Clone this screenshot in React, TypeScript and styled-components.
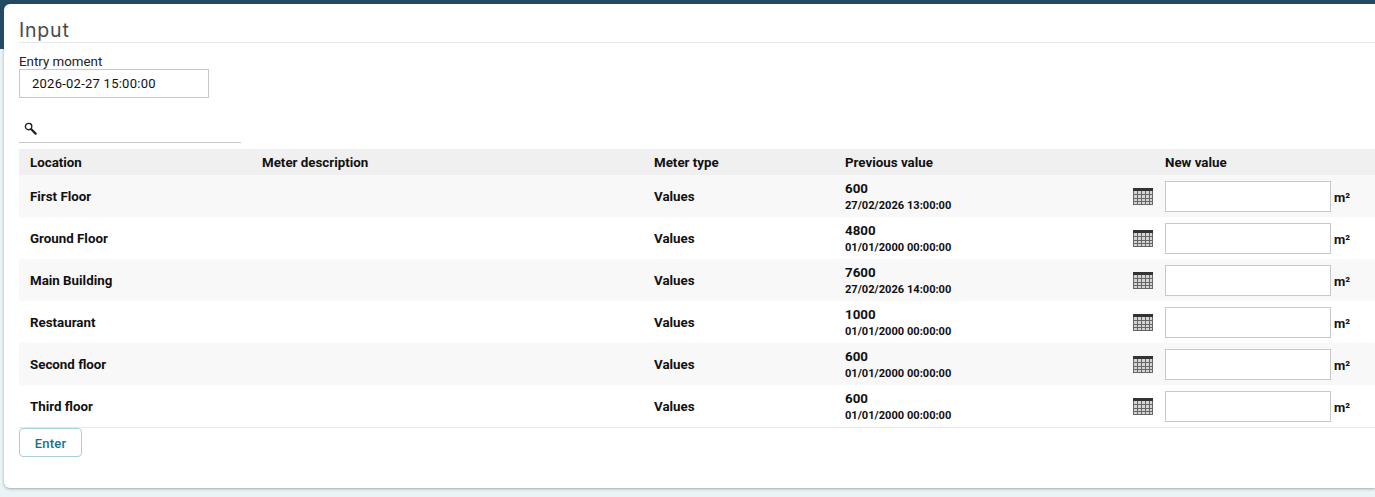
import React from "react";
import styled, { createGlobalStyle } from "styled-components";

const Global = createGlobalStyle`
  html, body { margin: 0; padding: 0; height: 100%; overflow: hidden; }
  body { font-family: Roboto, "Liberation Sans", sans-serif; color: #111; }
  * { box-sizing: border-box; }
`;

const Page = styled.div`
  width: 1375px;
  height: 497px;
  padding: 4px 0 9px 4px;
  background: linear-gradient(#234a60 0, #234a60 49px, #ebf3f6 49px);
`;

const Card = styled.main`
  height: 484px;
  padding: 11px 0 0 15px;
  background: #fff;
  border-radius: 6px 0 0 6px;
  box-shadow: 0 1px 3px rgba(60, 80, 90, 0.45);
`;

const Title = styled.h1`
  margin: 0;
  height: 28px;
  font: 400 19.5px/30px Inter, "Open Sans", sans-serif;
  letter-spacing: 0.8px;
  color: #4a4a4a;
  border-bottom: 1px solid #e8e8e8;
`;

const FieldLabel = styled.label`
  display: block;
  height: 16px;
  margin-top: 10px;
  font-size: 13.33px;
  line-height: 18px;
  color: #222;
`;

const DateInput = styled.input`
  display: block;
  width: 190px;
  height: 29px;
  margin-top: 0;
  padding: 0 12px;
  border: 1px solid #c8c8c8;
  border-radius: 0;
  outline: none;
  font: 400 13px Roboto, sans-serif;
  letter-spacing: 0.25px;
  color: #111;
`;

const SearchBar = styled.div`
  display: flex;
  align-items: center;
  width: 222px;
  height: 29px;
  margin-top: 16px;
  padding-left: 5px;
  border-bottom: 1px solid #c8c8c8;
`;

const Table = styled.table`
  width: 1356px;
  margin-top: 6px;
  table-layout: fixed;
  border-collapse: separate;
  border-spacing: 0;
  font-size: 13.33px;
  font-weight: 700;
  border-bottom: 1px solid #e8e8e8;
`;

const HeadCell = styled.th`
  height: 26px;
  padding: 1px 0 0 11px;
  background: #f0f0f0;
  text-align: left;
  font-weight: 700;
`;

const Row = styled.tr`
  height: 42px;
  background: ${(p: { $odd: boolean }) => (p.$odd ? "#f8f8f8" : "#fff")};
`;

const Cell = styled.td`
  padding: 0 0 0 11px;
  vertical-align: middle;
`;

const PreviousWrap = styled.div`
  display: flex;
  align-items: center;
  justify-content: space-between;
`;

const Reading = styled.div`
  padding-top: 2px;
`;

const Value = styled.div`
  line-height: 16px;
`;

const Stamp = styled.div`
  padding-top: 1px;
  font-size: 11.1px;
  line-height: 15px;
`;

const CalendarButton = styled.span`
  display: flex;
  margin-right: 1px;
  margin-top: 1px;
`;

const NewValue = styled.div`
  display: flex;
  align-items: flex-end;
  gap: 3px;
`;

const ValueInput = styled.input`
  width: 166px;
  height: 31px;
  border: 1px solid #c8c8c8;
  border-radius: 0;
  outline: none;
  background: #fff;
`;

const Unit = styled.span`
  font-size: 13px;
  line-height: 16px;
  padding-bottom: 6px;
`;

const EnterButton = styled.button`
  display: block;
  width: 63px;
  height: 29px;
  margin-top: 0;
  padding: 1px 0 0;
  background: #fff;
  border: 1px solid #a9cfdf;
  border-radius: 4px;
  font: 500 13px Roboto, sans-serif;
  letter-spacing: 0.2px;
  color: #1b7088;
`;

const SearchIcon = () => (
  <svg width="13" height="13" viewBox="0 0 13 13" fill="none">
    <circle cx="4.6" cy="4.6" r="3.2" stroke="#222" strokeWidth="1.4" />
    <path d="M7.3 7.3 L11.6 11.6" stroke="#222" strokeWidth="2.3" strokeLinecap="round" />
  </svg>
);

const CalendarIcon = () => (
  <svg width="20" height="17" viewBox="0 0 20 17" shapeRendering="crispEdges">
    <rect x="0" y="0" width="20" height="17" fill="#d4d4d4" />
    <rect x="0" y="0" width="20" height="3" fill="#333" />
    {[0, 4, 8, 12, 16, 19].map((x) => (
      <rect key={x} x={x} y="3" width="1" height="14" fill="#666" />
    ))}
    {[6, 10, 13, 16].map((y) => (
      <rect key={y} x="0" y={y} width="20" height="1" fill="#666" />
    ))}
  </svg>
);

const rows = [
  ["First Floor", "600", "27/02/2026 13:00:00"],
  ["Ground Floor", "4800", "01/01/2000 00:00:00"],
  ["Main Building", "7600", "27/02/2026 14:00:00"],
  ["Restaurant", "1000", "01/01/2000 00:00:00"],
  ["Second floor", "600", "01/01/2000 00:00:00"],
  ["Third floor", "600", "01/01/2000 00:00:00"],
];

export default function App() {
  return (
    <Page>
      <Global />
      <Card>
        <Title>Input</Title>
        <FieldLabel>Entry moment</FieldLabel>
        <DateInput readOnly value="2026-02-27 15:00:00" />
        <SearchBar>
          <SearchIcon />
        </SearchBar>
        <Table>
          <colgroup>
            <col style={{ width: 232 }} />
            <col style={{ width: 392 }} />
            <col style={{ width: 191 }} />
            <col style={{ width: 320 }} />
            <col style={{ width: 221 }} />
          </colgroup>
          <thead>
            <tr>
              <HeadCell>Location</HeadCell>
              <HeadCell>Meter description</HeadCell>
              <HeadCell>Meter type</HeadCell>
              <HeadCell>Previous value</HeadCell>
              <HeadCell>New value</HeadCell>
            </tr>
          </thead>
          <tbody>
            {rows.map(([loc, val, stamp], i) => (
              <Row key={loc} $odd={i % 2 === 0}>
                <Cell>{loc}</Cell>
                <Cell />
                <Cell>Values</Cell>
                <Cell>
                  <PreviousWrap>
                    <Reading>
                      <Value>{val}</Value>
                      <Stamp>{stamp}</Stamp>
                    </Reading>
                    <CalendarButton>
                      <CalendarIcon />
                    </CalendarButton>
                  </PreviousWrap>
                </Cell>
                <Cell>
                  <NewValue>
                    <ValueInput />
                    <Unit>m²</Unit>
                  </NewValue>
                </Cell>
              </Row>
            ))}
          </tbody>
        </Table>
        <EnterButton>Enter</EnterButton>
      </Card>
    </Page>
  );
}
